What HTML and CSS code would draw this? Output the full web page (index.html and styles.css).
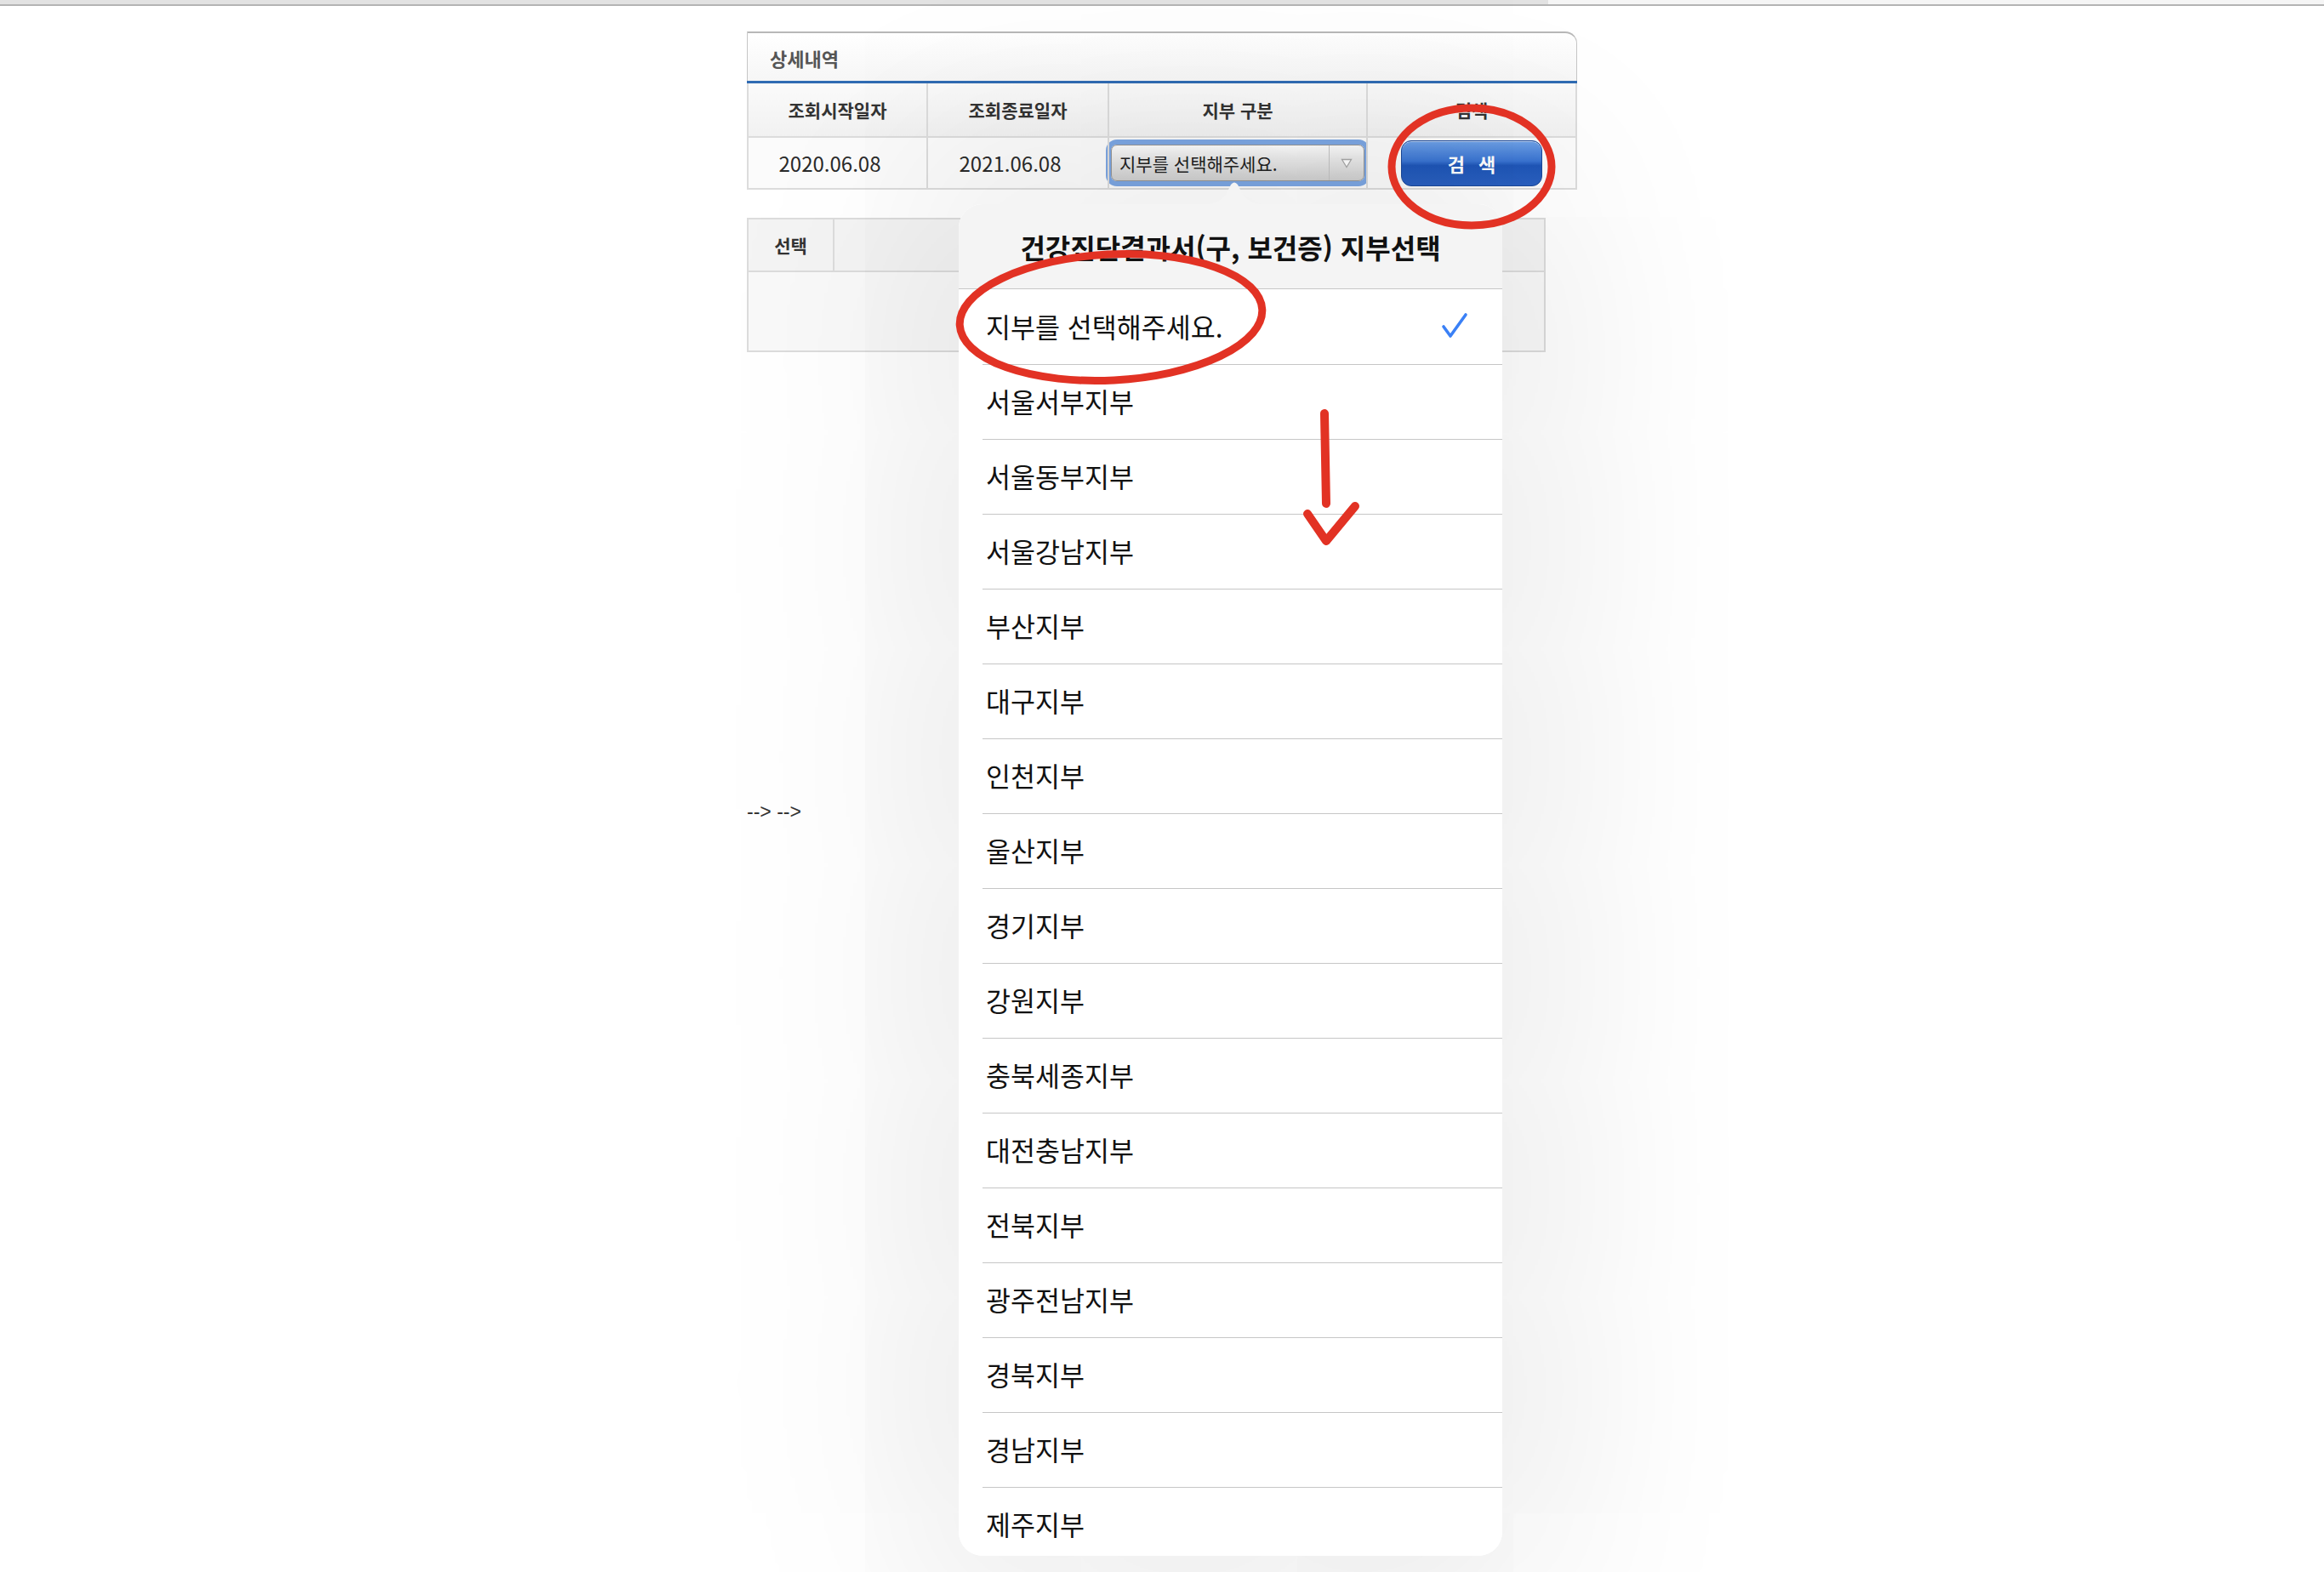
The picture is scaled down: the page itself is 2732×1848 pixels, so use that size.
FILE: index.html
```html
<!DOCTYPE html>
<html lang="ko">
<head>
  <meta charset="UTF-8">
  <meta name="viewport" content="width=device-width, initial-scale=1.0">
  <title>건강진단결과서 지부선택</title>
  <link rel="stylesheet" href="styles.css">
</head>
<body>
  <div class="topbar">
    <div class="topbar-left"></div>
    <div class="topbar-right"></div>
  </div>

  <main class="wrap">
    <section class="panel">
      <div class="panel-head">상세내역</div>
      <table class="search">
        <tr>
          <th class="c1">조회시작일자</th>
          <th class="c2">조회종료일자</th>
          <th class="c3">지부 구분</th>
          <th class="c4">검색</th>
        </tr>
        <tr>
          <td class="date">2020.06.08</td>
          <td class="date">2021.06.08</td>
          <td>
            <div class="select">
              <span class="select-text">지부를 선택해주세요.</span>
              <span class="select-arrow">
                <svg width="14" height="12" viewBox="0 0 14 12"><polygon points="1.5,1.5 12.5,1.5 7,10.5" fill="#fff" stroke="#a8a8a8" stroke-width="1.3"/></svg>
              </span>
            </div>
          </td>
          <td><button class="btn-search">검 색</button></td>
        </tr>
      </table>
    </section>

    <table class="result">
      <tr>
        <th class="pick">선택</th>
        <th></th>
      </tr>
      <tr>
        <td colspan="2"></td>
      </tr>
    </table>

    <p class="stray">--&gt; --&gt;</p>
  </main>

  <div class="popover">
    <svg class="popover-tip" width="90" height="28" viewBox="0 0 90 28">
      <path d="M0 28 C22 28 30 24 37 12 L41 4 Q45 -1 49 4 L53 12 C60 24 68 28 90 28 Z" fill="#f4f4f4"/>
    </svg>
    <div class="popover-body">
      <div class="popover-title">건강진단결과서(구, 보건증) 지부선택</div>
      <ul class="options">
        <li class="selected">
          <span>지부를 선택해주세요.</span>
          <svg class="check" width="32" height="32" viewBox="0 0 32 32"><polyline points="3,17 11,28 29,3" fill="none" stroke="#3a80f6" stroke-width="3.6" stroke-linecap="round" stroke-linejoin="round"/></svg>
        </li>
        <li>서울서부지부</li>
        <li>서울동부지부</li>
        <li>서울강남지부</li>
        <li>부산지부</li>
        <li>대구지부</li>
        <li>인천지부</li>
        <li>울산지부</li>
        <li>경기지부</li>
        <li>강원지부</li>
        <li>충북세종지부</li>
        <li>대전충남지부</li>
        <li>전북지부</li>
        <li>광주전남지부</li>
        <li>경북지부</li>
        <li>경남지부</li>
        <li>제주지부</li>
      </ul>
    </div>
  </div>

  <!-- 빨간 펜 표시 -->
  <svg class="marks" width="2732" height="1848" viewBox="0 0 2732 1848">
    <g fill="none" stroke="#e23224" stroke-linecap="round" stroke-linejoin="round">
      <ellipse cx="1730" cy="196" rx="94" ry="69" stroke-width="9"/>
      <ellipse cx="1306" cy="373" rx="178" ry="74" stroke-width="9" transform="rotate(-3 1306 373)"/>
      <polyline points="1557,486 1559,592" stroke-width="10"/>
      <polyline points="1537,604 1559,636 1593,595" stroke-width="10"/>
    </g>
  </svg>
</body>
</html>
```

FILE: styles.css
```css
html, body {
  margin: 0;
  padding: 0;
}
body {
  width: 2732px;
  height: 1848px;
  background: #fff;
  font-family: "Noto Sans CJK KR", "Noto Sans", sans-serif;
  color: #333;
  position: relative;
  overflow: hidden;
}
.topbar {
  display: flex;
  height: 5px;
  border-bottom: 2px solid #b4b4b4;
}
.topbar-left { width: 1820px; background: #e2e2e2; }
.topbar-right { flex: 1; background: #f5f5f5; }

.wrap {
  width: 976px;
  margin: 30px auto 0;
}

.panel-head {
  height: 58px;
  box-sizing: border-box;
  padding: 13px 0 0 26px;
  font-size: 22px;
  font-weight: bold;
  color: #555;
  background: linear-gradient(#fff, #f6f6f6);
  border: 1px solid #c6c6c6;
  border-top: 2px solid #b8b8b8;
  border-bottom: none;
  border-top-right-radius: 14px;
}
.search {
  width: 976px;
  border-collapse: collapse;
  table-layout: fixed;
  border-top: 3px solid #2f6bb3;
}
.search th, .search td {
  border: 2px solid #dcdcdc;
  text-align: center;
  padding: 0;
}
.search th {
  height: 62px;
  font-size: 21px;
  font-weight: bold;
  color: #333;
  background: linear-gradient(#fafafa, #f1f1f1);
}
.search td {
  height: 59px;
  font-size: 24px;
  color: #2a2a2a;
  background: #fbfbfb;
}
.search td.date { padding-right: 18px; }
.c1 { width: 209px; }
.c2 { width: 211px; }
.c3 { width: 302px; }

.select {
  width: 298px;
  height: 43px;
  margin: 0 auto;
  box-sizing: border-box;
  display: flex;
  align-items: center;
  border: 1px solid #969696;
  border-radius: 7px;
  background: linear-gradient(#fbfbfb, #e6e6e6 45%, #cfcfcf);
  box-shadow: 0 0 0 6px #7ca6e2;
}
.select-text {
  flex: 1;
  text-align: left;
  padding-left: 9px;
  font-size: 21px;
  color: #222;
}
.select-arrow {
  width: 40px;
  height: 100%;
  display: flex;
  align-items: center;
  justify-content: center;
  border-left: 1px solid #c2c2c2;
}

.btn-search {
  width: 166px;
  height: 54px;
  border: 1px solid #1b4899;
  border-radius: 12px;
  background: linear-gradient(#6da0e6, #3a74d2 45%, #1f56b8 55%, #2a60c0);
  color: #fff;
  font-family: inherit;
  font-size: 22px;
  font-weight: bold;
  letter-spacing: 5px;
  text-indent: 5px;
  box-shadow: inset 0 1px 0 rgba(255,255,255,0.5);
}

.result {
  width: 939px;
  margin-top: 33px;
  border-collapse: collapse;
  table-layout: fixed;
}
.result th, .result td {
  border: 2px solid #dcdcdc;
  padding: 0;
}
.result th {
  height: 60px;
  font-size: 21px;
  font-weight: bold;
  color: #333;
  background: #f4f4f4;
}
.result td {
  height: 92px;
  background: #f9f9f9;
}
.pick { width: 99px; }

.stray {
  margin: 527px 0 0;
  font-family: "Liberation Sans", sans-serif;
  font-size: 23px;
  color: #333;
}

.popover {
  position: absolute;
  left: 1127px;
  top: 240px;
  width: 639px;
  height: 1589px;
  border-radius: 28px;
  box-shadow: 0 0 280px 50px rgba(0,0,0,0.11);
}
.popover-tip {
  position: absolute;
  left: 279px;
  top: -27px;
  display: block;
}
.popover-body {
  height: 100%;
  background: #fff;
  border-radius: 28px;
  overflow: hidden;
}
.popover-title {
  height: 100px;
  box-sizing: border-box;
  display: flex;
  align-items: center;
  justify-content: center;
  background: #f4f4f4;
  border-bottom: 1.5px solid #c6c6c6;
  font-size: 32px;
  font-weight: bold;
  color: #111;
}
.options {
  list-style: none;
  margin: 0;
  padding: 0;
}
.options li {
  height: 88px;
  box-sizing: border-box;
  margin-left: 28px;
  padding: 0 40px 4px 4px;
  display: flex;
  align-items: center;
  justify-content: space-between;
  border-top: 1.5px solid #c6c6c6;
  font-size: 31.5px;
  color: #111;
}
.options li:first-child { border-top: none; }
.options li.selected { padding-bottom: 2px; }

.marks {
  position: absolute;
  left: 0;
  top: 0;
  pointer-events: none;
}
```
